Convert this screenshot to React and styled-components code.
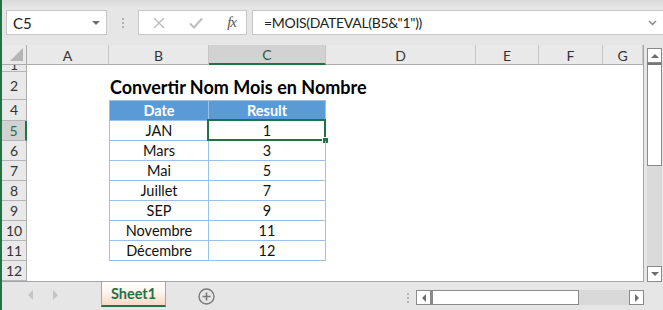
import React from "react";
import styled, { createGlobalStyle } from "styled-components";

const Global = createGlobalStyle`
  html, body { margin: 0; padding: 0; background: #fff; }
  body { font-family: Lato, "Liberation Sans", sans-serif; }
`;

const GREEN = "#217346";
const TBL = "#9bc2e6";

const Window = styled.div`
  width: 663px;
  height: 310px;
  overflow: hidden;
  display: flex;
  flex-direction: column;
  background: #e6e6e6;
  border-left: 2px solid ${GREEN};
  box-sizing: border-box;
`;

const FormulaBar = styled.div`
  height: 45px;
  flex: none;
  display: flex;
  align-items: flex-start;
  padding-top: 10px;
  box-sizing: border-box;
  background: linear-gradient(#dadada 0px, #e6e6e6 8px, #e6e6e6);
`;

const Box = styled.div`
  height: 25px;
  box-sizing: border-box;
  background: #fff;
  border: 1px solid #c6c6c6;
  display: flex;
  align-items: center;
  font-size: 15px;
  color: #222;
`;

const NameBox = styled(Box)`
  width: 101px;
  margin-left: 4px;
  padding: 0 6px;
  justify-content: space-between;
`;

const Dots = styled.div`
  width: 31px;
  height: 25px;
  display: flex;
  flex-direction: column;
  align-items: center;
  justify-content: center;
  gap: 2px;
  & > i {
    width: 2px;
    height: 2px;
    background: #b3b3b3;
  }
`;

const FxBox = styled(Box)`
  width: 109px;
  padding: 0 10px 0 14px;
  justify-content: space-between;
`;

const Fx = styled.span`
  font-family: "Liberation Serif", serif;
  font-style: italic;
  font-size: 15px;
  color: #555;
  letter-spacing: -1px;
`;

const FormulaInput = styled(Box)`
  flex: 1;
  margin-left: 5px;
  padding: 0 6px 0 11px;
  justify-content: space-between;
  border-right: none;
  font-size: 14px;
  letter-spacing: -0.3px;
`;

const Main = styled.div`
  display: flex;
  height: 237px;
  flex: none;
`;

const Sheet = styled.div`
  display: grid;
  grid-template-columns: 25px 82px 100px 117px 150px 63px 64px 40px;
  grid-template-rows: 20px 7px 28px 21px repeat(8, 20px);
  background: #fff;
  border-right: 1px solid #a6a6a6;
  border-bottom: 1px solid #a6a6a6;
  overflow: hidden;
`;

const ColHead = styled.div`
  background: ${(p) => (p.$sel ? "#d2d2d2" : "#e9e9e9")};
  border-right: 1px solid #c6c6c6;
  border-bottom: ${(p) => (p.$sel ? `2px solid ${GREEN}` : "1px solid #ababab")};
  box-sizing: border-box;
  display: flex;
  align-items: center;
  justify-content: center;
  font-size: 14px;
  color: ${(p) => (p.$sel ? "#2d5a40" : "#333")};
  padding-top: 1px;
`;

const Corner = styled(ColHead)`
  position: relative;
  border-right: 1px solid #ababab;
  &::after {
    content: "";
    position: absolute;
    right: 3px;
    bottom: 3px;
    border-style: solid;
    border-width: 0 0 13px 13px;
    border-color: transparent transparent #b5b5b5 transparent;
  }
`;

const RowHead = styled.div`
  background: ${(p) => (p.$sel ? "#d2d2d2" : "#e9e9e9")};
  border-right: ${(p) => (p.$sel ? `2px solid ${GREEN}` : "1px solid #ababab")};
  border-bottom: 1px solid #b5b5b5;
  box-sizing: border-box;
  display: flex;
  align-items: ${(p) => (p.$clip ? "flex-end" : "center")};
  justify-content: center;
  font-size: 14px;
  line-height: ${(p) => (p.$clip ? "12px" : "20px")};
  color: ${(p) => (p.$sel ? GREEN : "#333")};
  overflow: hidden;
`;

const Cell = styled.div`
  position: relative;
  box-sizing: border-box;
  display: flex;
  align-items: center;
  justify-content: ${(p) => (p.$left ? "flex-start" : "center")};
  padding-left: ${(p) => (p.$left ? "1px" : "0")};
  font-size: 14.5px;
  color: #111;
  white-space: nowrap;
  background: ${(p) => (p.$head ? "#5b9bd5" : "transparent")};
  ${(p) => p.$head && "color: #fff; font-weight: 700;"}
  ${(p) => p.$tbl && `border-bottom: 1px solid ${TBL}; border-right: 1px solid ${TBL};`}
  ${(p) => p.$first && `border-left: 1px solid ${TBL};`}
  ${(p) => p.$top && `border-top: 1px solid ${TBL};`}
`;

const Title = styled.span`
  font-size: 18px;
  font-weight: 700;
  color: #000;
  position: relative;
  top: 1px;
`;

const Selection = styled.div`
  position: absolute;
  left: -2px;
  top: -2px;
  right: -1px;
  bottom: -1px;
  border: 2px solid ${GREEN};
  &::after {
    content: "";
    position: absolute;
    right: -5px;
    bottom: -5px;
    width: 5px;
    height: 5px;
    background: ${GREEN};
    border: 1px solid #fff;
  }
`;

const VScroll = styled.div`
  width: 19px;
  flex: none;
  display: flex;
  flex-direction: column;
  padding: 3px 1px 0 3px;
  box-sizing: border-box;
  background: #e6e6e6;
`;

const ScrollBtn = styled.div`
  width: ${(p) => p.$w || "15px"};
  height: ${(p) => p.$h || "15px"};
  flex: none;
  box-sizing: border-box;
  border: 1px solid #8a8a8a;
  background: #fff;
  display: flex;
  align-items: center;
  justify-content: center;
`;

const VThumb = styled.div`
  height: 103px;
  box-sizing: border-box;
  border: 1px solid #8a8a8a;
  border-top: 2px solid #777;
  background: #fff;
`;

const Track = styled.div`
  flex: 1;
  background: #dadada;
`;

const TabBar = styled.div`
  flex: 1;
  display: flex;
  align-items: flex-start;
  background: #e6e6e6;
`;

const NavArrows = styled.div`
  width: 99px;
  height: 26px;
  display: flex;
  align-items: center;
  gap: 20px;
  padding-left: 26px;
  box-sizing: border-box;
`;

const Tab = styled.div`
  width: 65px;
  height: 25px;
  box-sizing: border-box;
  border-left: 1px solid #a6a6a6;
  border-right: 1px solid #a6a6a6;
  border-bottom: 2px solid ${GREEN};
  background: linear-gradient(#ffffff 0%, #fdf4ee 45%, #f6d9c6 100%);
  display: flex;
  align-items: center;
  justify-content: center;
  font-weight: 700;
  font-size: 14.5px;
  color: ${GREEN};
`;

const AddSheet = styled.div`
  margin: 6px 0 0 32px;
  width: 17px;
  height: 17px;
`;

const HScroll = styled.div`
  margin-left: auto;
  margin-right: 19px;
  display: flex;
  align-items: center;
  padding-top: 8px;
`;

const HDots = styled(Dots)`
  width: 16px;
  height: 15px;
`;

const HThumb = styled.div`
  width: 148px;
  height: 15px;
  box-sizing: border-box;
  border: 1px solid #8a8a8a;
  border-left-width: 2px;
  background: #fff;
`;

const HTrack = styled.div`
  width: 50px;
  height: 15px;
  background: #d9d9d9;
`;

const Tri = ({ dir, color = "#777", size = 4 }) => {
  const pts = {
    up: `0,${size} ${size},0 ${size * 2},${size}`,
    down: `0,0 ${size * 2},0 ${size},${size}`,
    left: `${size},0 ${size},${size * 2} 0,${size}`,
    right: `0,0 0,${size * 2} ${size},${size}`,
  }[dir];
  const horiz = dir === "left" || dir === "right";
  return (
    <svg width={horiz ? size : size * 2} height={horiz ? size * 2 : size}>
      <polygon points={pts} fill={color} />
    </svg>
  );
};

const cols = ["A", "B", "C", "D", "E", "F", "G"];
const data = [
  ["JAN", "1"],
  ["Mars", "3"],
  ["Mai", "5"],
  ["Juillet", "7"],
  ["SEP", "9"],
  ["Novembre", "11"],
  ["Décembre", "12"],
];

function Blank({ n }) {
  return Array.from({ length: n }, (_, i) => <Cell key={i} />);
}

export default function App() {
  return (
    <Window>
      <Global />
      <FormulaBar>
        <NameBox>
          <span>C5</span>
          <Tri dir="down" color="#6e6e6e" size={4} />
        </NameBox>
        <Dots>
          <i />
          <i />
          <i />
        </Dots>
        <FxBox>
          <svg width="12" height="12" viewBox="0 0 12 12">
            <path d="M1 1L11 11M11 1L1 11" stroke="#bcbcbc" strokeWidth="1.4" />
          </svg>
          <svg width="14" height="12" viewBox="0 0 14 12">
            <path d="M1 6.5L5 10.5L13 1.5" stroke="#bcbcbc" strokeWidth="2" fill="none" />
          </svg>
          <Fx>fx</Fx>
        </FxBox>
        <FormulaInput>
          <span>=MOIS(DATEVAL(B5&amp;"1"))</span>
          <svg width="9" height="6" viewBox="0 0 9 6">
            <path d="M1 1L4.5 4.5L8 1" stroke="#8a8a8a" strokeWidth="1.5" fill="none" />
          </svg>
        </FormulaInput>
      </FormulaBar>

      <Main>
        <Sheet>
          <Corner />
          {cols.map((c) => (
            <ColHead key={c} $sel={c === "C"}>
              {c}
            </ColHead>
          ))}

          <RowHead $clip>1</RowHead>
          <Blank n={7} />

          <RowHead>2</RowHead>
          <Cell />
          <Cell $left>
            <Title>Convertir Nom Mois en Nombre</Title>
          </Cell>
          <Blank n={5} />

          <RowHead>4</RowHead>
          <Cell />
          <Cell $head $tbl $first $top>
            Date
          </Cell>
          <Cell $head $tbl $top>
            Result
          </Cell>
          <Blank n={4} />

          {data.map(([d, r], i) => (
            <React.Fragment key={d}>
              <RowHead $sel={i === 0}>{i + 5}</RowHead>
              <Cell />
              <Cell $tbl $first>
                {d}
              </Cell>
              <Cell $tbl>
                {r}
                {i === 0 && <Selection />}
              </Cell>
              <Blank n={4} />
            </React.Fragment>
          ))}

          <RowHead>12</RowHead>
          <Blank n={7} />
        </Sheet>
        <VScroll>
          <ScrollBtn $h="15px">
            <Tri dir="up" color="#6e6e6e" size={4} />
          </ScrollBtn>
          <VThumb />
          <Track />
          <ScrollBtn $h="16px">
            <Tri dir="down" color="#6e6e6e" size={4} />
          </ScrollBtn>
        </VScroll>
      </Main>

      <TabBar>
        <NavArrows>
          <Tri dir="left" color="#c4c4c4" size={5} />
          <Tri dir="right" color="#c4c4c4" size={5} />
        </NavArrows>
        <Tab>Sheet1</Tab>
        <AddSheet>
          <svg width="17" height="17" viewBox="0 0 17 17">
            <circle cx="8.5" cy="8.5" r="7.5" fill="none" stroke="#7a7a7a" strokeWidth="1.4" />
            <path d="M8.5 4.5V12.5M4.5 8.5H12.5" stroke="#7a7a7a" strokeWidth="1.6" />
          </svg>
        </AddSheet>
        <HScroll>
          <HDots>
            <i />
            <i />
            <i />
          </HDots>
          <ScrollBtn>
            <Tri dir="left" color="#6e6e6e" size={4} />
          </ScrollBtn>
          <HThumb />
          <HTrack />
          <ScrollBtn>
            <Tri dir="right" color="#6e6e6e" size={4} />
          </ScrollBtn>
        </HScroll>
      </TabBar>
    </Window>
  );
}
